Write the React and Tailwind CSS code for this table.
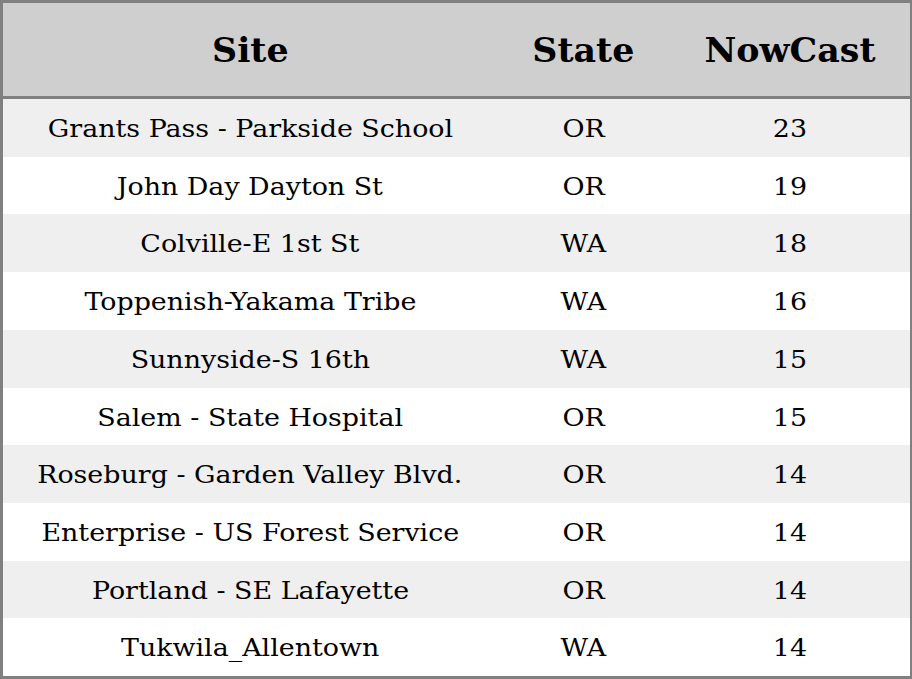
import React from 'react';

const rows = [
    { site: 'Grants Pass - Parkside School', state: 'OR', nowcast: 23 },
    { site: 'John Day Dayton St', state: 'OR', nowcast: 19 },
    { site: 'Colville-E 1st St', state: 'WA', nowcast: 18 },
    { site: 'Toppenish-Yakama Tribe', state: 'WA', nowcast: 16 },
    { site: 'Sunnyside-S 16th', state: 'WA', nowcast: 15 },
    { site: 'Salem - State Hospital', state: 'OR', nowcast: 15 },
    { site: 'Roseburg - Garden Valley Blvd.', state: 'OR', nowcast: 14 },
    { site: 'Enterprise - US Forest Service', state: 'OR', nowcast: 14 },
    { site: 'Portland - SE Lafayette', state: 'OR', nowcast: 14 },
    { site: 'Tukwila_Allentown', state: 'WA', nowcast: 14 },
];

const Cell = ({ children }) => (
    <div className="pt-[2px]">
        <span className="inline-block scale-x-[1.075] whitespace-nowrap">{children}</span>
    </div>
);

const HeadCell = ({ children }) => (
    <div className="pt-[2px]">
        <span className="inline-block scale-x-[1.055] whitespace-nowrap">{children}</span>
    </div>
);

const App = () => {
    return (
        <div className="w-[912px] h-[679px] border-[3px] border-r-2 border-[#808080] bg-white font-['DejaVu_Serif',serif] text-black flex flex-col">
            {/* Header */}
            <div className="grid grid-cols-[494px_173px_1fr] h-[96px] shrink-0 bg-[#cfcfcf] border-b-[3px] border-[#808080] text-[33px] font-bold items-center text-center">
                <HeadCell>Site</HeadCell>
                <HeadCell>State</HeadCell>
                <HeadCell>NowCast</HeadCell>
            </div>

            {/* Rows */}
            <div className="flex-1 grid grid-rows-10">
                {rows.map((row, i) => (
                    <div
                        key={row.site}
                        className={`grid grid-cols-[494px_173px_1fr] items-center text-center text-[25px] ${i % 2 === 0 ? 'bg-[#efefef]' : 'bg-white'}`}
                    >
                        <Cell>{row.site}</Cell>
                        <Cell>{row.state}</Cell>
                        <Cell>{row.nowcast}</Cell>
                    </div>
                ))}
            </div>
        </div>
    );
};

export default App;
